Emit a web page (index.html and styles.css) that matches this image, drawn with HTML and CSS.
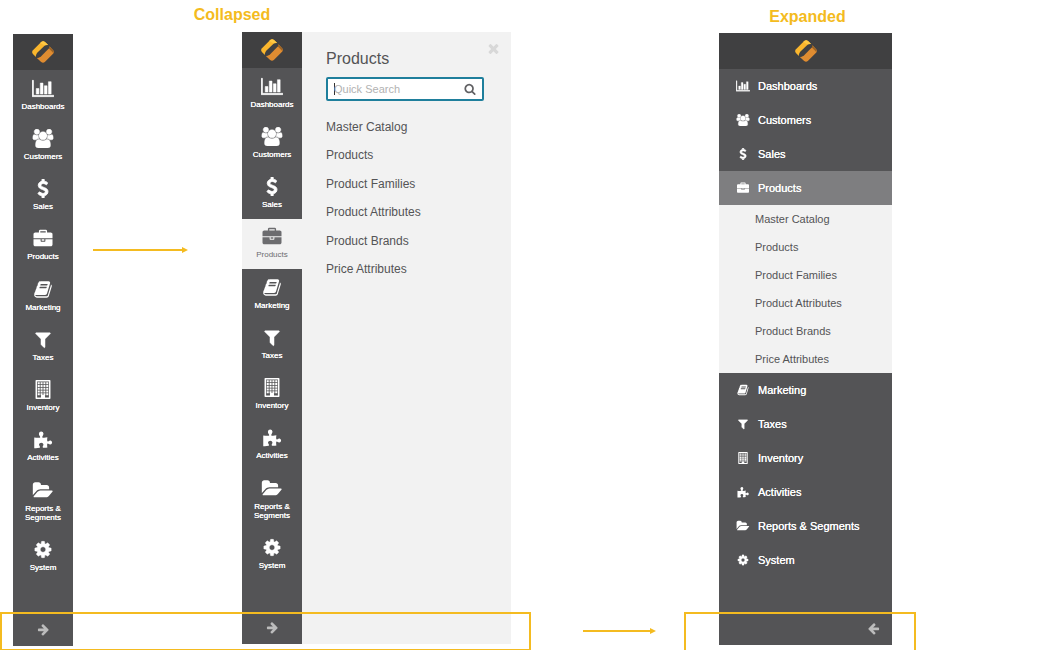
FILE: index.html
```html
<!DOCTYPE html>
<html lang="en">
<head>
<meta charset="utf-8">
<title>Navigation menu states</title>
<link rel="stylesheet" href="styles.css">
</head>
<body>
<svg class="sprite" aria-hidden="true">
  <symbol id="logo" viewBox="0 0 24 24">
    <path fill="#fab62d" d="M10 1.2Q12 -.7 14.2 1L17.4 4 3.9 17.2 1 14.2Q-.7 12 1 10Z"/>
    <path fill="#ffc843" d="M10 1.2Q12 -.7 14.2 1L17.4 4 14.3 5.2 9 2.2Z"/>
    <path fill="#df8c31" d="M5.3 18.5 19.6 6.2 23 10Q24.6 12 23 14L14 23Q12 24.6 10 23Z"/>
    <path fill="#9c6426" d="M17.8 4.3 23 10Q24.2 11.6 23.2 13.2L18.4 8.3Z"/>
    <path fill="#404041" d="M4.2 16.3Q4.6 14 6 12.6L13.7 5.3Q16 3.6 18.5 4.6 19.3 6.5 18.3 8.2L10 16.5Q7.5 18.5 5 18.6Z"/>
  </symbol>
  <symbol id="bar-chart" viewBox="0 0 2048 1792"><path stroke="currentColor" stroke-width="50" d="M640 896v512h-256v-512h256zm384-512v1024h-256v-1024h256zm1024 1152v128h-2048v-1536h128v1408h1920zm-640-896v768h-256v-768h256zm384-384v1152h-256v-1152h256z"/></symbol>
  <symbol id="users" viewBox="0 0 1920 1792"><path d="M593 896q-162 5-265 128h-134q-82 0-138-40.500t-56-118.500q0-353 124-353 6 0 43.500 21t97.500 42.500 119 21.500q67 0 133-23-5 37-5 66 0 139 81 256zm1071 637q0 120-73 189.500t-194 69.500h-874q-121 0-194-69.500t-73-189.500q0-53 3.500-103.500t14-109 26.500-108.500 43-97.500 62-81 85.500-53.500 111.500-20q10 0 43 21.500t73 48 107 48 135 21.500 135-21.500 107-48 73-48 43-21.500q61 0 111.500 20t85.500 53.500 62 81 43 97.500 26.500 108.500 14 109 3.500 103.500zm-1024-1277q0 106-75 181t-181 75-181-75-75-181 75-181 181-75 181 75 75 181zm704 384q0 159-112.500 271.500t-271.500 112.500-271.500-112.500-112.500-271.500 112.500-271.500 271.500-112.500 271.500 112.500 112.500 271.500zm576 225q0 78-56 118.500t-138 40.500h-134q-103-123-265-128 81-117 81-256 0-29-5-66 66 23 133 23 59 0 119-21.500t97.500-42.500 43.500-21q124 0 124 353zm-128-609q0 106-75 181t-181 75-181-75-75-181 75-181 181-75 181 75 75 181z" stroke="currentColor" stroke-width="40"/></symbol>
  <symbol id="usd" viewBox="0 0 1792 1792"><path stroke="currentColor" stroke-width="90" d="M1362 1185q0 153-99.500 263.500t-258.500 136.500v175q0 14-9 23t-23 9h-135q-13 0-22.500-9.500t-9.500-22.500v-175q-66-9-127.500-31t-101.500-44.500-74-48-46.500-37.500-17.500-18q-17-21-2-41l103-135q7-10 23-12 15-2 24 9l2 2q113 99 243 125 37 8 74 8 81 0 142.500-43t61.500-122q0-28-15-53t-33.500-42-58.500-37.500-66-32-80-32.500q-39-16-61.500-25t-61.500-26.500-62.500-31-56.500-35.500-53.500-42.500-43.500-49-35.500-58-21-66.500-8.500-78q0-138 98-242t255-134v-180q0-13 9.500-22.500t22.500-9.500h135q14 0 23 9t9 23v176q57 6 110.500 23t87 33.500 63.500 37.500 39 29 15 14q17 18 5 38l-81 146q-8 15-23 16-14 3-27-7-3-3-14.500-12t-39-26.500-58.500-32-74.500-26-85.500-11.500q-95 0-155 43t-60 111q0 26 8.500 48t29.500 41.500 39.500 33 56 31 60.500 27 70 27.500q53 20 81 31.500t76 35 75.500 42.500 62 50 53 63.500 31.500 76.500 13 94z"/></symbol>
  <symbol id="briefcase" viewBox="0 -80 1792 1792"><path d="M640 256h512v-128h-512v128zm1152 640v480q0 66-47 113t-113 47h-1472q-66 0-113-47t-47-113v-480h672v160q0 26 19 45t45 19h320q26 0 45-19t19-45v-160h672zm-768 0v128h-256v-128h256zm768-480v384h-1792v-384q0-66 47-113t113-47h352v-160q0-40 28-68t68-28h576q40 0 68 28t28 68v160h352q66 0 113 47t47 113z"/></symbol>
  <symbol id="book" viewBox="0 0 1792 1792"><path d="M1703 478q40 57 18 129l-275 906q-19 64-76.500 107.500t-122.500 43.500h-923q-77 0-148.500-53.500t-99.500-131.500q-24-67-2-127 0-4 3-27t4-37q1-8-3-21.500t-3-19.500q2-11 8-21t16.500-23.500 16.500-23.500q23-38 45-91.500t30-91.500q3-10 .5-30t-.5-28q3-11 17-28t17-23q21-36 42-92t25-90q1-9-2.500-32t.5-28q4-13 22-30.500t22-22.500q19-26 42.500-84.500t27.500-96.500q1-8-3-25.500t-2-26.500q2-8 9-18t18-23 17-21q8-12 16.500-30.500t15-35 16-36 19.500-32 26.500-23.500 36-11.500 47.500 5.500l-1 3q38-9 51-9h761q74 0 114 56t18 130l-274 906q-36 119-71.500 153.500t-128.500 34.500h-869q-27 0-38 15-11 16-1 43 24 70 144 70h923q29 0 56-15.500t35-41.500l300-987q7-22 5-57 38 15 59 43zm-1064 2q-4 13 2 22.500t20 9.500h608q13 0 25.500-9.500t16.500-22.500l21-64q4-13-2-22.500t-20-9.500h-608q-13 0-25.500 9.500t-16.500 22.500zm-83 256q-4 13 2 22.500t20 9.500h608q13 0 25.500-9.500t16.500-22.500l21-64q4-13-2-22.500t-20-9.500h-608q-13 0-25.500 9.500t-16.500 22.500z"/></symbol>
  <symbol id="filter" viewBox="0 0 1792 1792"><path stroke="currentColor" stroke-width="40" d="M1595 295q17 41-14 70l-493 493v742q0 42-39 59-13 5-25 5-27 0-45-19l-256-256q-19-19-19-45v-486l-493-493q-31-29-14-70 17-39 59-39h1280q42 0 59 39z"/></symbol>
  <symbol id="building" viewBox="0 0 1792 1792"><path fill-rule="evenodd" d="M256 0h1280q64 0 64 64v1664q0 64-64 64H256q-64 0-64-64V64Q192 0 256 0zM340 148v1496h364v-204q0-32 32-32h320q32 0 32 32v204h364V148z"/><path d="M400 220h190v190H400zM667 220h190v190H667zM934 220h190v190H934zM1202 220h190v190H1202zM400 476h190v190H400zM667 476h190v190H667zM934 476h190v190H934zM1202 476h190v190H1202zM400 732h190v190H400zM667 732h190v190H667zM934 732h190v190H934zM1202 732h190v190H1202zM400 988h190v190H400zM667 988h190v190H667zM934 988h190v190H934zM1202 988h190v190H1202zM400 1244h190v190H400zM667 1244h190v190H667zM934 1244h190v190H934zM1202 1244h190v190H1202z"/></symbol>
  <symbol id="puzzle" viewBox="0 0 1792 1792"><path d="M70 700Q400 745 610 720Q670 680 600 590Q500 480 510 350Q530 150 720 140Q920 145 940 340Q945 470 850 590Q790 690 860 720Q1050 750 1310 690Q1270 890 1295 1030Q1330 1110 1420 1050Q1510 970 1610 985Q1745 1010 1755 1180Q1740 1350 1590 1365Q1490 1370 1400 1290Q1310 1250 1290 1330Q1275 1480 1310 1660Q1090 1690 900 1665Q830 1640 880 1540Q950 1450 935 1350Q910 1200 735 1195Q550 1205 520 1350Q510 1450 600 1560Q640 1640 580 1680Q310 1745 70 1715Z"/></symbol>
  <symbol id="folder-open" viewBox="0 0 1920 1792"><path d="M1879 952q0 31-31 66l-336 396q-43 51-120.500 86.500t-143.500 35.500h-1088q-34 0-60.500-13t-26.500-43q0-31 31-66l336-396q43-51 120.500-86.500t143.500-35.500h1088q34 0 60.500 13t26.500 43zm-343-344v160h-832q-94 0-197 47.500t-164 119.500l-337 396-5 6q0-4-.5-12.500t-.5-12.500v-960q0-92 66-158t158-66h320q92 0 158 66t66 158v32h544q92 0 158 66t66 158z"/></symbol>
  <symbol id="cog" viewBox="0 0 1792 1792"><path stroke="currentColor" stroke-width="40" d="M1152 896q0-106-75-181t-181-75-181 75-75 181 75 181 181 75 181-75 75-181zm512-109v222q0 12-8 23t-20 13l-185 28q-19 54-39 91 35 50 107 138 10 12 10 25t-9 23q-27 37-99 108t-94 71q-12 0-26-9l-138-108q-44 23-91 38-16 136-29 186-7 28-36 28h-222q-14 0-24.500-8.500t-11.500-21.500l-28-184q-49-16-90-37l-141 107q-10 9-25 9-14 0-25-11-126-114-165-168-7-10-7-23 0-12 8-23 15-21 51-66.500t54-70.500q-27-50-41-99l-183-27q-13-2-21-12.500t-8-23.500v-222q0-12 8-23t19-13l186-28q14-46 39-92-40-57-107-138-10-12-10-24 0-10 9-23 26-36 98.500-107.500t94.500-71.500q13 0 26 10l138 107q44-23 91-38 16-136 29-186 7-28 36-28h222q14 0 24.500 8.500t11.500 21.500l28 184q49 16 90 37l142-107q9-9 24-9 13 0 25 10 129 119 165 170 7 8 7 22 0 12-8 23-15 21-51 66.500t-54 70.500q26 50 41 98l183 28q13 2 21 12.500t8 23.500z"/></symbol>
  <symbol id="arrow-right" viewBox="0 0 1792 1792"><path d="M1600 960q0 54-37 91l-651 651q-39 37-91 37-51 0-90-37l-75-75q-38-38-38-91t38-91l293-293h-704q-52 0-84.500-37.500t-32.500-90.500v-128q0-53 32.500-90.500t84.500-37.500h704l-293-294q-38-36-38-90t38-90l75-75q38-38 90-38 53 0 91 38l651 651q37 35 37 90z"/></symbol>
  <symbol id="times" viewBox="0 0 1792 1792"><path d="M1490 1322q0 40-28 68l-136 136q-28 28-68 28t-68-28l-294-294-294 294q-28 28-68 28t-68-28l-136-136q-28-28-28-68t28-68l294-294-294-294q-28-28-28-68t28-68l136-136q28-28 68-28t68 28l294 294 294-294q28-28 68-28t68 28l136 136q28 28 28 68t-28 68l-294 294 294 294q28 28 28 68z"/></symbol>
  <symbol id="search" viewBox="0 0 1792 1792"><path d="M1216 832q0-185-131.500-316.500t-316.500-131.500-316.500 131.500-131.500 316.500 131.500 316.500 316.500 131.500 316.500-131.500 131.500-316.500zm512 832q0 52-38 90t-90 38q-54 0-90-38l-343-342q-179 124-399 124-143 0-273.500-55.500t-225-150-150-225-55.500-273.500 55.500-273.500 150-225 225-150 273.500-55.500 273.500 55.500 225 150 150 225 55.500 273.500q0 220-124 399l343 343q37 37 37 90z"/></symbol>
</svg>

<main class="board">
  <section class="state state--collapsed">
    <h1 class="state__title">Collapsed</h1>
    <div class="state__stage">
      <nav class="rail rail--closed" aria-label="Collapsed menu">
        <a class="brand" href="#" aria-label="Home"><svg class="brand__logo"><use href="#logo"/></svg></a>
        <ul class="rail__list">
          <li class="rail__item"><a class="rail__link" href="#"><svg class="icon"><use href="#bar-chart"/></svg>Dashboards</a></li>
          <li class="rail__item"><a class="rail__link" href="#"><svg class="icon"><use href="#users"/></svg>Customers</a></li>
          <li class="rail__item"><a class="rail__link" href="#"><svg class="icon"><use href="#usd"/></svg>Sales</a></li>
          <li class="rail__item"><a class="rail__link" href="#"><svg class="icon"><use href="#briefcase"/></svg>Products</a></li>
          <li class="rail__item"><a class="rail__link" href="#"><svg class="icon"><use href="#book"/></svg>Marketing</a></li>
          <li class="rail__item"><a class="rail__link" href="#"><svg class="icon"><use href="#filter"/></svg>Taxes</a></li>
          <li class="rail__item"><a class="rail__link" href="#"><svg class="icon"><use href="#building"/></svg>Inventory</a></li>
          <li class="rail__item"><a class="rail__link" href="#"><svg class="icon"><use href="#puzzle"/></svg>Activities</a></li>
          <li class="rail__item"><a class="rail__link" href="#"><svg class="icon"><use href="#folder-open"/></svg>Reports &amp; Segments</a></li>
          <li class="rail__item"><a class="rail__link" href="#"><svg class="icon"><use href="#cog"/></svg>System</a></li>
        </ul>
        <button class="toggle" type="button" aria-label="Expand menu"><svg class="toggle__icon"><use href="#arrow-right"/></svg></button>
      </nav>

      <div class="arrow arrow--open"></div>

      <div class="flyout">
        <nav class="rail" aria-label="Collapsed menu, Products open">
          <a class="brand" href="#" aria-label="Home"><svg class="brand__logo"><use href="#logo"/></svg></a>
          <ul class="rail__list">
            <li class="rail__item"><a class="rail__link" href="#"><svg class="icon"><use href="#bar-chart"/></svg>Dashboards</a></li>
            <li class="rail__item"><a class="rail__link" href="#"><svg class="icon"><use href="#users"/></svg>Customers</a></li>
            <li class="rail__item"><a class="rail__link" href="#"><svg class="icon"><use href="#usd"/></svg>Sales</a></li>
            <li class="rail__item"><a class="rail__link rail__link--active" href="#"><svg class="icon"><use href="#briefcase"/></svg>Products</a></li>
            <li class="rail__item"><a class="rail__link" href="#"><svg class="icon"><use href="#book"/></svg>Marketing</a></li>
            <li class="rail__item"><a class="rail__link" href="#"><svg class="icon"><use href="#filter"/></svg>Taxes</a></li>
            <li class="rail__item"><a class="rail__link" href="#"><svg class="icon"><use href="#building"/></svg>Inventory</a></li>
            <li class="rail__item"><a class="rail__link" href="#"><svg class="icon"><use href="#puzzle"/></svg>Activities</a></li>
            <li class="rail__item"><a class="rail__link" href="#"><svg class="icon"><use href="#folder-open"/></svg>Reports &amp; Segments</a></li>
            <li class="rail__item"><a class="rail__link" href="#"><svg class="icon"><use href="#cog"/></svg>System</a></li>
          </ul>
          <button class="toggle" type="button" aria-label="Expand menu"><svg class="toggle__icon"><use href="#arrow-right"/></svg></button>
        </nav>
        <div class="panel">
          <button class="panel__close" type="button" aria-label="Close"><svg class="panel__close-icon"><use href="#times"/></svg></button>
          <h2 class="panel__title">Products</h2>
          <form class="search">
            <input class="search__input" type="text" placeholder="Quick Search" aria-label="Quick Search" autofocus>
            <button class="search__button" type="button" aria-label="Search"><svg class="search__icon"><use href="#search"/></svg></button>
          </form>
          <ul class="panel__list">
            <li class="panel__item"><a class="panel__link" href="#">Master Catalog</a></li>
            <li class="panel__item"><a class="panel__link" href="#">Products</a></li>
            <li class="panel__item"><a class="panel__link" href="#">Product Families</a></li>
            <li class="panel__item"><a class="panel__link" href="#">Product Attributes</a></li>
            <li class="panel__item"><a class="panel__link" href="#">Product Brands</a></li>
            <li class="panel__item"><a class="panel__link" href="#">Price Attributes</a></li>
          </ul>
        </div>
      </div>
    </div>
    <div class="highlight highlight--collapsed"></div>
  </section>

  <div class="arrow arrow--expand"></div>

  <section class="state state--expanded">
    <h1 class="state__title">Expanded</h1>
    <nav class="menu" aria-label="Expanded menu">
      <a class="brand" href="#" aria-label="Home"><svg class="brand__logo"><use href="#logo"/></svg></a>
      <ul class="menu__list">
        <li><a class="menu__link" href="#"><svg class="icon icon--small"><use href="#bar-chart"/></svg>Dashboards</a></li>
        <li><a class="menu__link" href="#"><svg class="icon icon--small"><use href="#users"/></svg>Customers</a></li>
        <li><a class="menu__link" href="#"><svg class="icon icon--small"><use href="#usd"/></svg>Sales</a></li>
        <li>
          <a class="menu__link menu__link--active" href="#"><svg class="icon icon--small"><use href="#briefcase"/></svg>Products</a>
          <ul class="submenu">
            <li><a class="submenu__link" href="#">Master Catalog</a></li>
            <li><a class="submenu__link" href="#">Products</a></li>
            <li><a class="submenu__link" href="#">Product Families</a></li>
            <li><a class="submenu__link" href="#">Product Attributes</a></li>
            <li><a class="submenu__link" href="#">Product Brands</a></li>
            <li><a class="submenu__link" href="#">Price Attributes</a></li>
          </ul>
        </li>
        <li><a class="menu__link" href="#"><svg class="icon icon--small"><use href="#book"/></svg>Marketing</a></li>
        <li><a class="menu__link" href="#"><svg class="icon icon--small"><use href="#filter"/></svg>Taxes</a></li>
        <li><a class="menu__link" href="#"><svg class="icon icon--small"><use href="#building"/></svg>Inventory</a></li>
        <li><a class="menu__link" href="#"><svg class="icon icon--small"><use href="#puzzle"/></svg>Activities</a></li>
        <li><a class="menu__link" href="#"><svg class="icon icon--small"><use href="#folder-open"/></svg>Reports &amp; Segments</a></li>
        <li><a class="menu__link" href="#"><svg class="icon icon--small"><use href="#cog"/></svg>System</a></li>
      </ul>
      <button class="toggle toggle--collapse" type="button" aria-label="Collapse menu"><svg class="toggle__icon toggle__icon--left"><use href="#arrow-right"/></svg></button>
    </nav>
    <div class="highlight highlight--expanded"></div>
  </section>
</main>
</body>
</html>
```
FILE: styles.css
```css
:root {
  --accent: #f4bb20;
  --dark: #404041;
  --rail: #545456;
  --light: #f2f2f2;
}

* { box-sizing: border-box; }

body {
  margin: 0;
  background: #fff;
  font-family: "Liberation Sans", Arial, sans-serif;
}

ul { margin: 0; padding: 0; list-style: none; }
a { color: inherit; text-decoration: none; }
button { border: 0; padding: 0; background: none; cursor: pointer; }
svg { display: block; fill: currentColor; }

.sprite { position: absolute; width: 0; height: 0; }

.board {
  display: grid;
  grid-template-columns: auto minmax(0, 208fr) auto minmax(0, 148fr);
  min-height: 100vh;
  overflow: hidden;
}

.state {
  position: relative;
  display: flex;
  flex-direction: column;
}
.state--collapsed { padding: 0 0 4px 13px; }
.state--expanded { width: 173px; padding-bottom: 5px; }

.state__title {
  margin: 0;
  color: var(--accent);
  font-size: 16px;
  font-weight: bold;
  text-align: center;
}
.state--collapsed .state__title { height: 32px; padding-right: 60px; line-height: 30px; }
.state--expanded .state__title { height: 33px; padding-left: 4px; line-height: 34px; }

.state__stage { display: flex; flex: 1; }

/* Icon rail */
.rail {
  display: flex;
  flex-direction: column;
  width: 60px;
  background: var(--rail);
  color: #fff;
}
.rail--closed { margin-top: 2px; }

.brand {
  display: flex;
  align-items: center;
  justify-content: center;
  height: 36px;
  background: var(--dark);
}
.brand__logo { width: 22px; height: 22px; }

.rail__item:nth-child(4n+1) { margin-top: 1px; }
.rail__link {
  display: flex;
  flex-direction: column;
  align-items: center;
  gap: 4px;
  min-height: 50px;
  padding: 8px 8px 10px;
  font-size: 8px;
  line-height: 9px;
  text-align: center;
  text-shadow: 0 0 0 currentColor;
}
.rail__link--active { background: var(--light); color: #6c6c6f; text-shadow: none; }

.icon { flex: none; width: 22px; height: 19px; }
.icon--small { width: 14px; height: 12px; }

.toggle {
  display: flex;
  align-items: center;
  justify-content: center;
  height: 33px;
  margin-top: auto;
  color: #bcbcbc;
}
.toggle--collapse { justify-content: flex-end; padding-right: 12px; }
.toggle__icon { width: 13px; height: 13px; }
.toggle__icon--left { transform: scaleX(-1); }

/* Rail with open panel */
.flyout { display: flex; margin-bottom: 2px; background: var(--light); }

.panel {
  position: relative;
  width: 209px;
  padding: 17px 27px 0 24px;
  color: #545456;
}
.panel__title { margin: 0; font-size: 16px; font-weight: normal; line-height: 20px; }
.panel__close { position: absolute; top: 9px; right: 10px; color: #d8d8d8; }
.panel__close-icon { width: 15px; height: 15px; }

.search {
  display: flex;
  align-items: center;
  height: 24px;
  margin: 8px 0 12px;
  padding: 0 6px;
  border: 2px solid #1f7f9c;
  border-radius: 2px;
  background: #fff;
}
.search__input {
  flex: 1;
  min-width: 0;
  padding: 0;
  border: 0;
  outline: 0;
  background: none;
  color: #333;
  font: 11px/14px "Liberation Sans", Arial, sans-serif;
}
.search__input::placeholder { color: #b2b2b2; opacity: 1; }
/* Steady caret while the field is empty */
.search__input:placeholder-shown {
  background: linear-gradient(#333, #333) left center / 1px 12px no-repeat;
  caret-color: transparent;
}
.search__icon { width: 12px; height: 12px; color: #606063; }

.panel__item:nth-child(odd) { margin-top: 1px; }
.panel__link { display: block; font-size: 12px; line-height: 28px; }

/* Full menu */
.menu {
  display: flex;
  flex: 1;
  flex-direction: column;
  background: var(--rail);
  color: #fff;
}
.menu__link {
  display: flex;
  align-items: center;
  gap: 8px;
  height: 34px;
  padding-left: 17px;
  font-size: 11px;
  text-shadow: 0 0 0 currentColor;
}
.menu__link--active { background: #7e7e80; }

.submenu { background: var(--light); color: #545456; }
.submenu__link { display: block; padding-left: 36px; font-size: 11px; line-height: 28px; }

/* Annotations */
.arrow {
  display: flex;
  align-items: center;
  height: 6px;
}
.arrow::before { content: ""; flex: 1; height: 2px; background: var(--accent); }
.arrow::after {
  content: "";
  border: 3px solid transparent;
  border-left: 6px solid var(--accent);
  border-right: 0;
}
.arrow--open { width: 95px; margin: 215px 54px 0 20px; }
.arrow--expand { align-self: end; margin: 0 63px 16px 72px; }

.highlight {
  position: absolute;
  bottom: -1px;
  height: 39px;
  border: 2px solid var(--accent);
  pointer-events: none;
}
.highlight--collapsed { left: 0; right: -20px; }
.highlight--expanded { left: -35px; right: -24px; border-bottom: 0; }
```
